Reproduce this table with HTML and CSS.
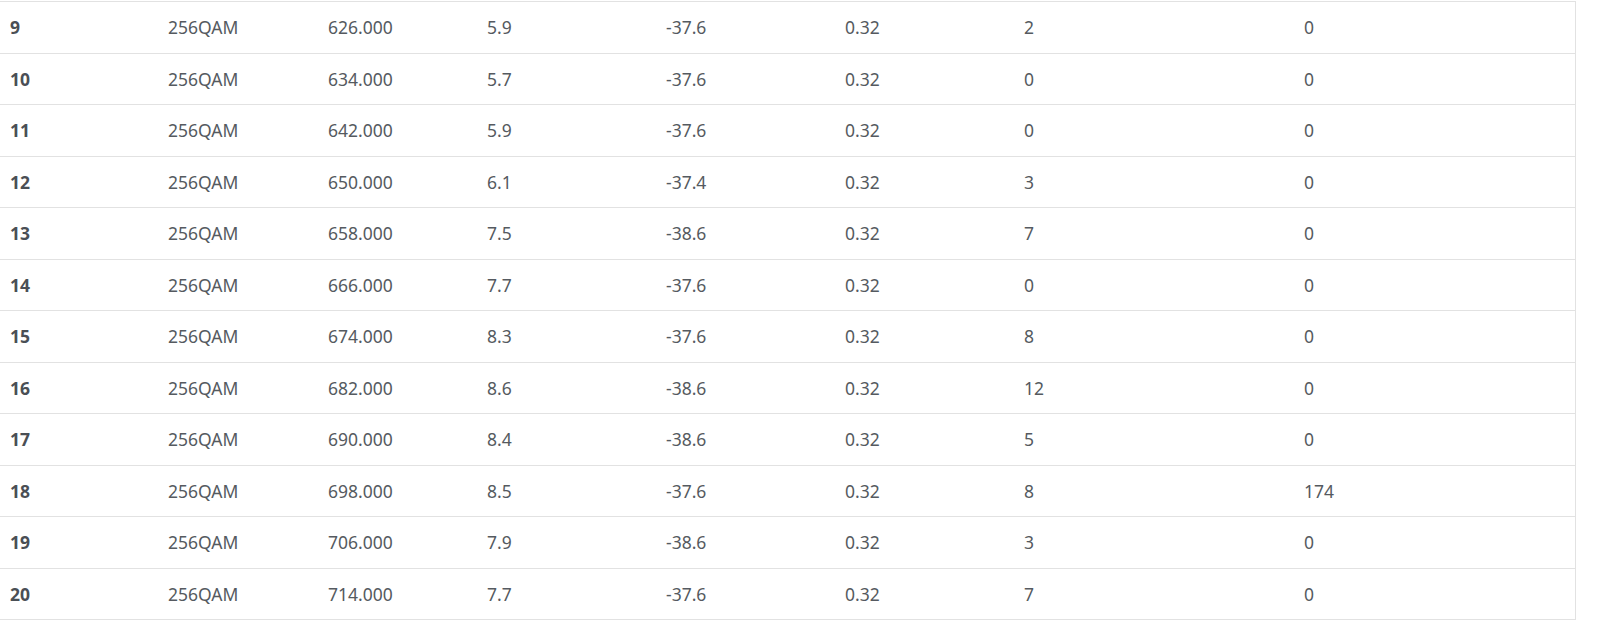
FILE: index.html
```html
<!DOCTYPE html>
<html>
<head>
<meta charset="utf-8">
<link rel="stylesheet" href="styles.css">
</head>
<body>
<div class="wrap">
<table class="channels">
<colgroup>
<col class="c1"><col class="c2"><col class="c3"><col class="c4"><col class="c5"><col class="c6"><col class="c7"><col class="c8">
</colgroup>
<tbody>
<tr><th>9</th><td>256QAM</td><td>626.000</td><td>5.9</td><td>-37.6</td><td>0.32</td><td>2</td><td>0</td></tr>
<tr><th>10</th><td>256QAM</td><td>634.000</td><td>5.7</td><td>-37.6</td><td>0.32</td><td>0</td><td>0</td></tr>
<tr><th>11</th><td>256QAM</td><td>642.000</td><td>5.9</td><td>-37.6</td><td>0.32</td><td>0</td><td>0</td></tr>
<tr><th>12</th><td>256QAM</td><td>650.000</td><td>6.1</td><td>-37.4</td><td>0.32</td><td>3</td><td>0</td></tr>
<tr><th>13</th><td>256QAM</td><td>658.000</td><td>7.5</td><td>-38.6</td><td>0.32</td><td>7</td><td>0</td></tr>
<tr><th>14</th><td>256QAM</td><td>666.000</td><td>7.7</td><td>-37.6</td><td>0.32</td><td>0</td><td>0</td></tr>
<tr><th>15</th><td>256QAM</td><td>674.000</td><td>8.3</td><td>-37.6</td><td>0.32</td><td>8</td><td>0</td></tr>
<tr><th>16</th><td>256QAM</td><td>682.000</td><td>8.6</td><td>-38.6</td><td>0.32</td><td>12</td><td>0</td></tr>
<tr><th>17</th><td>256QAM</td><td>690.000</td><td>8.4</td><td>-38.6</td><td>0.32</td><td>5</td><td>0</td></tr>
<tr><th>18</th><td>256QAM</td><td>698.000</td><td>8.5</td><td>-37.6</td><td>0.32</td><td>8</td><td>174</td></tr>
<tr><th>19</th><td>256QAM</td><td>706.000</td><td>7.9</td><td>-38.6</td><td>0.32</td><td>3</td><td>0</td></tr>
<tr><th>20</th><td>256QAM</td><td>714.000</td><td>7.7</td><td>-37.6</td><td>0.32</td><td>7</td><td>0</td></tr>
</tbody>
</table>
</div>
</body>
</html>
```

FILE: styles.css
```css
html, body {
  margin: 0;
  padding: 0;
  background: #ffffff;
}
body {
  font-family: "Noto Sans", "Open Sans", sans-serif;
  font-size: 17.5px;
  color: #555a60;
}
.wrap {
  padding-top: 1px;
  width: 1575px;
}
.channels {
  width: 1575px;
  border-collapse: collapse;
  table-layout: fixed;
  border-right: 1px solid #e2e2e2;
}
.c1 { width: 158px; }
.c2 { width: 160px; }
.c3 { width: 159px; }
.c4 { width: 179px; }
.c5 { width: 179px; }
.c6 { width: 179px; }
.c7 { width: 280px; }
.c8 { width: 281px; }
.channels tr {
  height: 51.5px;
}
.channels th,
.channels td {
  border-top: 1px solid #e2e2e2;
  border-bottom: 1px solid #e2e2e2;
  padding: 0 0 0 10px;
  text-align: left;
  vertical-align: middle;
  white-space: nowrap;
}
.channels th {
  font-weight: 700;
  color: #4a4f55;
}
.channels td {
  font-weight: 400;
}
```
